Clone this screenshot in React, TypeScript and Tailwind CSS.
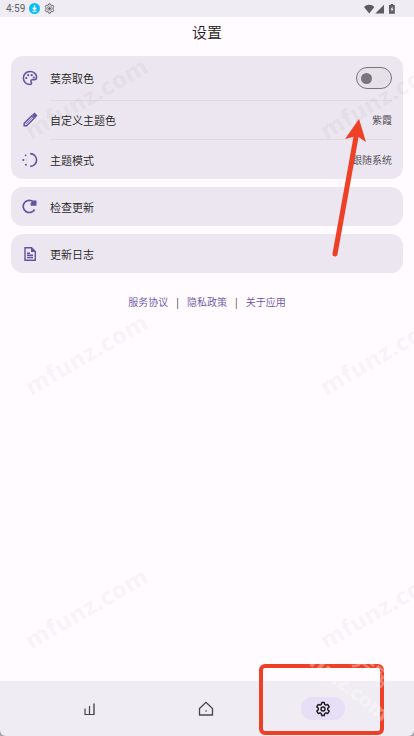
import React, { useState } from 'react';

const iconClass = 'size-4 shrink-0 text-[#6750a4]';

const PaletteIcon = () => (
  <svg viewBox="0 0 16 16" className={iconClass} fill="none" stroke="currentColor" strokeWidth="1.5" aria-hidden="true">
    <path d="M8 1.5C4.300 1.500 1.400 4.300 1.400 8s2.900 6.600 6.600 6.600c1 0 1.600-.7 1.600-1.500 0-1-.7-1.200-.7-2 0-.8.7-1.300 1.500-1.300h1.700c1.500 0 2.500-1 2.500-2.500 0-3.300-3-5.800-6.600-5.800Z" />
    <g fill="currentColor" stroke="none">
      <circle cx="4.300" cy="8" r="1.100" />
      <circle cx="6.200" cy="5.200" r="1.100" />
      <circle cx="9.700" cy="5.200" r="1.100" />
      <circle cx="11.800" cy="7.600" r="1.100" />
    </g>
  </svg>
);

const PencilIcon = () => (
  <svg viewBox="0 0 16 16" className={iconClass} fill="none" stroke="currentColor" strokeWidth="1.500" aria-hidden="true">
    <path d="M2.200 13.800v-2.400l7.700-7.700 2.400 2.400-7.700 7.700Z" />
    <path d="M4 12l6.600-6.600" strokeWidth=".6" />
    <path d="m11.200 2.800 1.300-1.200 1.900 1.900-1.200 1.300Z" fill="currentColor" />
  </svg>
);

const ModeIcon = () => (
  <svg viewBox="0 0 16 16" className={iconClass} fill="none" stroke="currentColor" strokeWidth="1.600" aria-hidden="true">
    <path d="M8.200 1.600a6.400 6.400 0 1 1 0 12.800" />
    <g fill="currentColor" stroke="none">
      <circle cx="3.600" cy="3.300" r=".9" />
      <circle cx="1.300" cy="8" r="1.100" />
      <circle cx="4.500" cy="8" r=".4" />
      <circle cx="3.900" cy="12.800" r="1" />
    </g>
  </svg>
);

const RefreshIcon = () => (
  <svg viewBox="0 0 16 16" className={iconClass} fill="none" stroke="currentColor" strokeWidth="1.600" aria-hidden="true">
    <path d="M11.500 3A6.100 6.100 0 1 0 12.600 10.500" />
    <path d="M14.500 1.500v5.300H8.700V4.200l2-2.700Z" fill="currentColor" stroke="none" />
  </svg>
);

const LogIcon = () => (
  <svg viewBox="0 0 16 16" className={iconClass} fill="none" stroke="currentColor" strokeWidth="1.400" aria-hidden="true">
    <path d="M3 1.700h6.500l3.800 3.800v8.800H3Z" />
    <path d="M9 1.500v4.600h4.600Z" fill="currentColor" stroke="none" />
    <path d="M5 7.300h3M5 9.300h6M5 11.500h6" />
  </svg>
);

const StatusBar = () => (
  <header className="flex h-[17px] items-center justify-between bg-[#f0ecf3] pr-[18px] pl-1.5 text-[#5e5c61]">
    <div className="flex items-center gap-1">
      <span className="font-[Roboto] text-[10px] leading-4">4:59</span>
      <svg viewBox="0 0 12 12" className="size-[11px]" aria-hidden="true">
        <circle cx="6" cy="6" r="6" fill="#08bdf8" />
        <path d="M6 2.500v4M4 5.200l2 2 2-2M3.600 9h4.800" fill="none" stroke="#fff" strokeWidth="1.300" />
      </svg>
      <svg viewBox="0 0 12 12" className="size-[11px]" fill="none" stroke="currentColor" aria-hidden="true">
        <path d="M4.600 2.200 5 1h2l.4 1.200 1 .5 1.300-.3 1 1.700-.8 1v1.800l.8 1-1 1.700-1.300-.3-1 .5L7 11H5l-.4-1.200-1-.5-1.300.3-1-1.700.8-1V5.100l-.8-1 1-1.700 1.300.3Z" />
        <circle cx="6" cy="6" r="2.700" strokeWidth=".6" />
        <circle cx="6" cy="6" r="1.500" fill="currentColor" stroke="none" />
      </svg>
    </div>
    <svg viewBox="0 0 32 12" className="h-3 w-8" fill="currentColor" aria-hidden="true">
      <path d="M0 4a7.200 7.200 0 0 1 10.400 0L5.200 10.400Z" />
      <path d="M20 1.800v8.700h-8.700Z" />
      <path d="M25 2h1.700V1h2.400v1h1.700v8.700H25Z" />
      <path d="m28.500 3.500-2.100 3h1.200v2.300l2-3h-1.100Z" fill="#f0ecf3" />
    </svg>
  </header>
);

type RowProps = {
  icon: React.ReactNode;
  label: string;
  value?: string;
};

const Row = ({ icon, label, value }: RowProps) => (
  <button type="button" className="flex h-[39px] w-full items-center gap-3 px-[11px] text-left">
    {icon}
    <span className="flex-1 text-[11px] leading-4 font-[350] text-[#1d1b20]">{label}</span>
    {value && <span className="text-[10px] leading-4 font-[350] text-[#49454f]">{value}</span>}
  </button>
);

const Divider = ({ className = '' }: { className?: string }) => (
  <div className={`mr-[11px] ml-[39px] h-px bg-[#dfdae4] ${className}`} />
);

const watermarks = [
  'top-[84px] left-[11px]',
  'top-[84px] left-[306px]',
  'top-[340px] left-[11px]',
  'top-[340px] left-[306px]',
  'top-[594px] left-[11px]',
  'top-[594px] left-[306px]',
];

const Overlay = () => (
  <div className="pointer-events-none absolute inset-0 overflow-hidden" aria-hidden="true">
    {watermarks.map((pos) => (
      <span
        key={pos}
        className={`absolute ${pos} w-[150px] -rotate-30 text-center font-[family-name:'Open_Sans',sans-serif] text-[24px] leading-7 font-extrabold text-black/3`}
      >
        mfunz.com
      </span>
    ))}

    {/* Pointer to the theme controls */}
    <svg viewBox="0 0 40 144" className="absolute top-[116px] left-[330px] h-36 w-10">
      <path d="M5 138 26 21" stroke="#ee4026" strokeWidth="5" strokeLinecap="round" />
      <path d="M29 3 36 26 27 20 15 23Z" fill="#ee4026" />
    </svg>

    {/* Highlight round the settings tab */}
    <div className="absolute right-[30px] bottom-px h-[71px] w-[125px] overflow-hidden rounded-md border-4 border-[#ee4026]" />
    <div className="absolute right-[30px] bottom-px h-[71px] w-[125px] overflow-hidden rounded-md">
      <span className="absolute top-[4px] left-[26px] w-[110px] rotate-38 text-center font-[family-name:'Open_Sans',sans-serif] text-[20px] leading-6 font-extrabold text-white/35">
        mfunz.com
      </span>
      <span className="absolute -top-[12px] left-[72px] w-[66px] rotate-38 text-center text-[20px] leading-6 font-bold text-white/35">
        魔方网
      </span>
    </div>
  </div>
);

const SettingsPage = () => {
  const [monet, setMonet] = useState(false);

  return (
    <div className="flex min-h-screen flex-col bg-[#fffbff]">
      <StatusBar />

      <main className="flex-1 px-[11px]">
        <h1 className="pt-[3px] pb-3 text-center text-[15px] leading-6 font-[350] text-[#1d1b20]">设置</h1>

        <div className="flex flex-col gap-2">
          <section className="rounded-xl bg-[#ebe6ef]">
            <label className="flex h-11 items-center gap-3 px-[11px]">
              <PaletteIcon />
              <span className="flex-1 text-[11px] leading-4 font-[350] text-[#1d1b20]">莫奈取色</span>
              <input
                type="checkbox"
                role="switch"
                checked={monet}
                onChange={(e) => setMonet(e.target.checked)}
                className="flex h-[22px] w-9 appearance-none items-center rounded-full border border-[#79747e] bg-[#e6e0e9] px-1 before:size-[11px] before:rounded-full before:bg-[#79747e] checked:justify-end checked:bg-[#6750a4] checked:before:bg-white"
              />
            </label>
            <Divider className="-mb-px" />
            <Row icon={<PencilIcon />} label="自定义主题色" value="紫霞" />
            <Divider />
            <Row icon={<ModeIcon />} label="主题模式" value="跟随系统" />
          </section>

          <section className="rounded-xl bg-[#ebe6ef]">
            <Row icon={<RefreshIcon />} label="检查更新" />
          </section>

          <section className="rounded-xl bg-[#ebe6ef]">
            <Row icon={<LogIcon />} label="更新日志" />
          </section>
        </div>

        <div className="mt-[21px] flex items-center justify-center gap-2 text-[10px] leading-4 font-[350] text-[#6750a4]">
          <a href="#terms">服务协议</a>
          <span className="text-[#1d1b20]">|</span>
          <a href="#privacy">隐私政策</a>
          <span className="text-[#1d1b20]">|</span>
          <a href="#about">关于应用</a>
        </div>
      </main>

      <div className="bg-[#a9a8a7]">
        <nav className="grid grid-cols-3 items-center rounded-b-md bg-[#f0ecf3] py-4 pr-[33px] pl-[31px] text-[#49454f]">
          <a href="#stats" aria-label="统计" className="flex justify-center">
            <svg viewBox="0 0 16 16" className="size-4" fill="none" stroke="currentColor" aria-hidden="true">
              <path d="M4 7.500v6M8.500 5v8.500" strokeWidth="1.200" />
              <path d="M13 2.500V14" strokeWidth="1.400" />
              <path d="M3.500 13.500H13" />
            </svg>
          </a>
          <a href="#home" aria-label="首页" className="flex justify-center">
            <svg viewBox="0 0 16 16" className="size-4" fill="none" stroke="currentColor" aria-hidden="true">
              <path d="M1.500 7.500 8 1.300l6.500 6.200v6.500h-13Z" strokeWidth="1.300" />
              <circle cx="8" cy="10" r=".8" fill="currentColor" stroke="none" />
            </svg>
          </a>
          <a href="#settings" aria-label="设置" aria-current="page" className="flex justify-center">
            <span className="flex h-[23px] w-11 items-center justify-center rounded-full bg-[#e7def7] text-[#1d1b20]">
              <svg viewBox="0 0 16 16" className="size-4" fill="none" stroke="currentColor" strokeWidth="1.400" strokeLinejoin="round" aria-hidden="true">
                <path d="M6.700 1.500h2.600l.4 2 1.200.7 1.900-.7 1.400 2.400-1.500 1.300v1.600l1.500 1.300-1.400 2.400-1.900-.7-1.200.7-.4 2H6.700l-.4-2-1.200-.7-1.900.7-1.400-2.400 1.500-1.300V7.200L1.800 5.900l1.400-2.400 1.900.7 1.200-.7Z" />
                <circle cx="8" cy="8" r="2" />
              </svg>
            </span>
          </a>
        </nav>
      </div>
    </div>
  );
};

const App = () => (
  <div className="relative font-[family-name:'Noto_Sans_CJK_SC',sans-serif]">
    <SettingsPage />
    <Overlay />
  </div>
);

export default App;
